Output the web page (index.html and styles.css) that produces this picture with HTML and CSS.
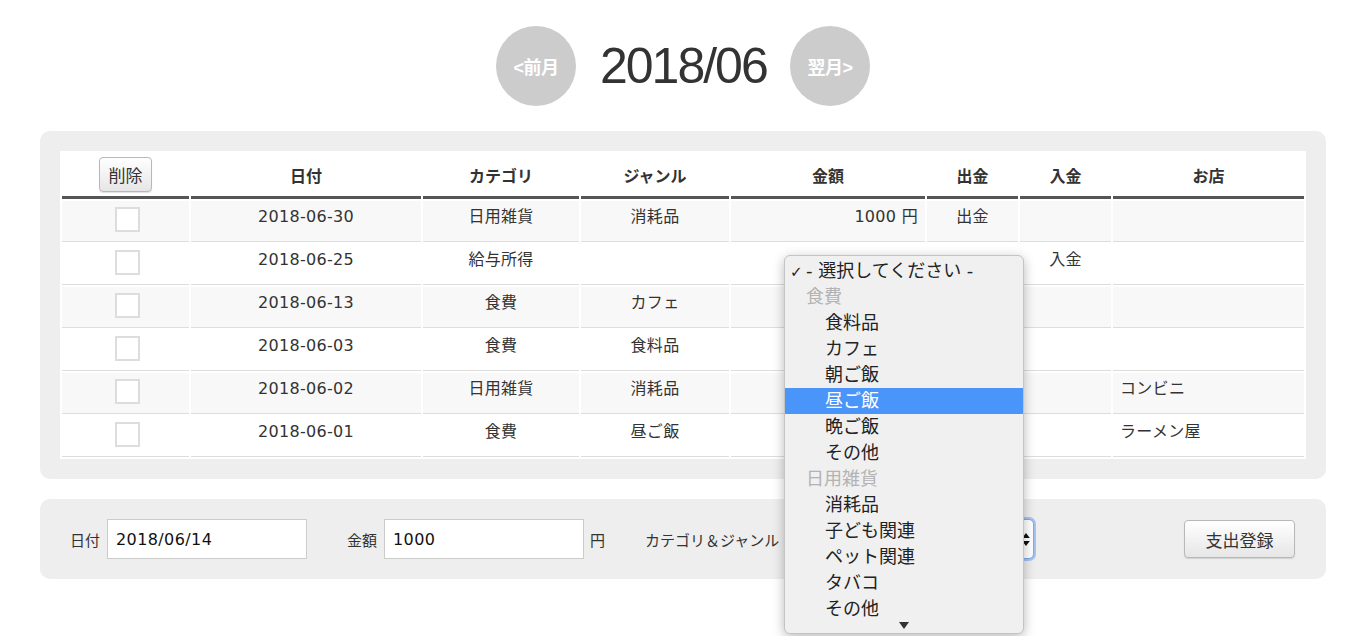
FILE: index.html
```html
<!DOCTYPE html>
<html lang="ja">
<head>
<meta charset="utf-8">
<title>家計簿</title>
<link rel="stylesheet" href="styles.css">
</head>
<body>
<div class="page">
  <header class="month-nav">
    <a class="circle-btn">&lt;前月</a>
    <h1 class="month-title">2018/06</h1>
    <a class="circle-btn">翌月&gt;</a>
  </header>

  <section class="panel list-panel">
    <table class="records">
      <colgroup>
        <col style="width:127px"><col style="width:230px"><col style="width:156px"><col style="width:148px">
        <col style="width:194px"><col style="width:91px"><col style="width:91px"><col style="width:191px">
      </colgroup>
      <thead>
        <tr>
          <th><button class="btn btn-small">削除</button></th>
          <th>日付</th><th>カテゴリ</th><th>ジャンル</th><th>金額</th><th>出金</th><th>入金</th><th>お店</th>
        </tr>
      </thead>
      <tbody>
        <tr class="odd"><td class="sel"><input type="checkbox" class="chk"></td><td>2018-06-30</td><td>日用雑貨</td><td>消耗品</td><td class="num">1000 円</td><td>出金</td><td></td><td class="shop"></td></tr>
        <tr><td class="sel"><input type="checkbox" class="chk"></td><td>2018-06-25</td><td>給与所得</td><td></td><td class="num"></td><td></td><td>入金</td><td class="shop"></td></tr>
        <tr class="odd"><td class="sel"><input type="checkbox" class="chk"></td><td>2018-06-13</td><td>食費</td><td>カフェ</td><td class="num"></td><td></td><td></td><td class="shop"></td></tr>
        <tr><td class="sel"><input type="checkbox" class="chk"></td><td>2018-06-03</td><td>食費</td><td>食料品</td><td class="num"></td><td></td><td></td><td class="shop"></td></tr>
        <tr class="odd"><td class="sel"><input type="checkbox" class="chk"></td><td>2018-06-02</td><td>日用雑貨</td><td>消耗品</td><td class="num"></td><td></td><td></td><td class="shop">コンビニ</td></tr>
        <tr><td class="sel"><input type="checkbox" class="chk"></td><td>2018-06-01</td><td>食費</td><td>昼ご飯</td><td class="num"></td><td></td><td></td><td class="shop">ラーメン屋</td></tr>
      </tbody>
    </table>
  </section>

  <section class="panel form-panel">
    <label class="lbl">日付</label>
    <input class="txt" type="text" value="2018/06/14">
    <label class="lbl lbl-gap">金額</label>
    <input class="txt" type="text" value="1000">
    <span class="unit">円</span>
    <label class="lbl lbl-gap">カテゴリ＆ジャンル</label>
    <div class="select-box">
      <svg class="select-arrows" width="8" height="15" viewBox="0 0 8 15"><path d="M4 1 L7.8 6 H0.2 Z M4 14 L7.8 9 H0.2 Z" fill="#111"/></svg>
    </div>
    <button class="btn btn-submit">支出登録</button>
  </section>

  <div class="menu">
    <div class="menu-item first"><span class="check">✓</span>- 選択してください -</div>
    <div class="menu-group">食費</div>
    <div class="menu-item">食料品</div>
    <div class="menu-item">カフェ</div>
    <div class="menu-item">朝ご飯</div>
    <div class="menu-item active">昼ご飯</div>
    <div class="menu-item">晩ご飯</div>
    <div class="menu-item">その他</div>
    <div class="menu-group">日用雑貨</div>
    <div class="menu-item">消耗品</div>
    <div class="menu-item">子ども関連</div>
    <div class="menu-item">ペット関連</div>
    <div class="menu-item">タバコ</div>
    <div class="menu-item">その他</div>
    <div class="menu-scroll"><span class="down-tri"></span></div>
  </div>
</div>
</body>
</html>
```

FILE: styles.css
```css
* { box-sizing: border-box; }
html, body { margin: 0; padding: 0; background: #fff; }
body {
  font-family: "DejaVu Sans", "Noto Sans CJK JP", sans-serif;
  color: #333;
}
.page {
  position: relative;
  width: 1366px;
  height: 636px;
  overflow: hidden;
  padding: 26px 40px 0 40px;
}

/* month navigation */
.month-nav {
  display: flex;
  justify-content: center;
  align-items: center;
  height: 80px;
  gap: 24px;
}
.circle-btn {
  width: 80px;
  height: 80px;
  border-radius: 50%;
  background: #cccccc;
  color: #fff;
  font-family: "Liberation Sans", "Noto Sans CJK JP", sans-serif;
  font-weight: bold;
  font-size: 18px;
  display: flex;
  align-items: center;
  justify-content: center;
  letter-spacing: -0.5px;
}
.month-title {
  margin: 0;
  font-family: "Liberation Sans", sans-serif;
  font-weight: normal;
  font-size: 50px;
  letter-spacing: -2px;
  color: #333;
  width: 166px;
  text-align: center;
}

/* panels */
.panel {
  background: #eeeeee;
  border-radius: 10px;
}
.list-panel {
  margin-top: 25px;
  padding: 20px;
}
.records {
  width: 1246px;
  table-layout: fixed;
  border-collapse: separate;
  border-spacing: 2px;
  background: #fff;
  font-size: 16px;
}
.records th {
  padding: 4px 7px;
  border-bottom: 3px solid #555;
  font-family: "Noto Sans CJK JP", sans-serif;
  font-weight: bold;
  font-size: 16px;
  color: #333;
  vertical-align: middle;
  text-align: center;
  line-height: 20px;
}
.records td {
  padding: 6px 7px 9px;
  border-bottom: 1px solid #dddddd;
  text-align: center;
  vertical-align: top;
  line-height: 20px;
  color: #333;
  white-space: nowrap;
  letter-spacing: 0.3px;
}
.records td.sel { padding-left: 11px; }
.records tr.odd td { background: #f8f8f8; }
.records td.num { text-align: right; }
.records td.shop { text-align: left; }
.chk {
  -webkit-appearance: none;
  appearance: none;
  display: block;
  margin: 0 auto;
  width: 25px;
  height: 25px;
  border: 2px solid #dddddd;
  background: #fff;
  border-radius: 0;
}

/* buttons */
.btn {
  font-family: "Noto Sans CJK JP", sans-serif;
  color: #333;
  background: linear-gradient(#ffffff, #e6e6e6);
  border: 1px solid #b8b8b8;
  border-radius: 4px;
  box-shadow: 0 1px 1px rgba(0,0,0,0.12);
  cursor: pointer;
}
.btn-small {
  font-size: 17px;
  width: 53px;
  height: 35px;
  padding: 0;
  line-height: 33px;
  margin: 0 auto;
  display: block;
}

/* form */
.form-panel {
  margin-top: 20px;
  height: 80px;
  padding: 0 31px 0 30px;
  display: flex;
  align-items: center;
}
.lbl {
  font-family: "Noto Sans CJK JP", sans-serif;
  font-size: 15px;
  color: #333;
  margin-right: 7px;
}
.lbl-gap { margin-left: 40px; }
.txt {
  width: 200px;
  height: 40px;
  border: 1px solid #cccccc;
  background: #fff;
  padding: 0 8px;
  font-family: "DejaVu Sans", sans-serif;
  font-size: 16px;
  letter-spacing: 0.4px;
  color: #111;
  outline: none;
  border-radius: 0;
}
.unit {
  font-family: "Noto Sans CJK JP", sans-serif;
  font-size: 15px;
  margin-left: 6px;
}
.select-box {
  position: relative;
  width: 248px;
  height: 40px;
  background: #fff;
  border: 1px solid #7fa9e6;
  border-radius: 5px;
  box-shadow: 0 0 0 2px rgba(110,160,240,0.55);
}
.select-arrows {
  position: absolute;
  right: 3px;
  top: 12px;
}
.btn-submit {
  margin-left: auto;
  width: 111px;
  height: 38px;
  font-size: 17px;
  padding: 0;
}

/* dropdown menu overlay */
.menu {
  position: absolute;
  left: 784px;
  top: 255px;
  width: 240px;
  height: 379px;
  background: #f0f0f0;
  border: 1px solid #c4c4c4;
  border-radius: 6px;
  box-shadow: 0 3px 12px rgba(0,0,0,0.28);
  padding-top: 2px;
  overflow: hidden;
  font-family: "DejaVu Sans", "Noto Sans CJK JP", sans-serif;
  font-size: 18px;
  color: #222;
}
.menu-item, .menu-group {
  height: 26px;
  line-height: 26px;
  white-space: nowrap;
}
.menu-item { padding-left: 40px; }
.menu-item.first { padding-left: 21px; position: relative; }
.menu-group { padding-left: 21px; color: #b3b3b3; }
.menu-item.active { background: #4a95fa; color: #fff; }
.check {
  position: absolute;
  left: 5px;
  top: 1px;
  font-size: 15px;
  font-weight: bold;
}
.menu-scroll {
  height: 11px;
  display: flex;
  justify-content: center;
  align-items: flex-start;
}
.down-tri {
  width: 0;
  height: 0;
  border-left: 5px solid transparent;
  border-right: 5px solid transparent;
  border-top: 7px solid #333;
}
```
